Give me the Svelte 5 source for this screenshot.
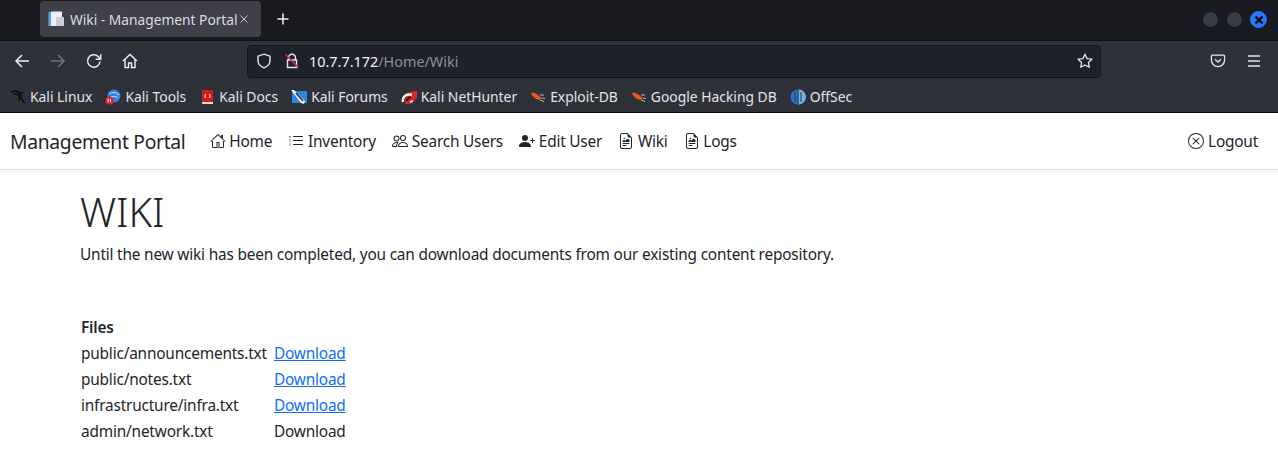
<script>
  const bookmarks = [
    { label: "Kali Linux", icon: "dragon" },
    { label: "Kali Tools", icon: "tools" },
    { label: "Kali Docs", icon: "docs" },
    { label: "Kali Forums", icon: "forums" },
    { label: "Kali NetHunter", icon: "hunter" },
    { label: "Exploit-DB", icon: "bug" },
    { label: "Google Hacking DB", icon: "bug" },
    { label: "OffSec", icon: "offsec" },
  ];

  const HOUSE = "M2 13.5V7h1v6.5a.5.5 0 0 0 .5.5h9a.5.5 0 0 0 .5-.5V7h1v6.5a1.5 1.5 0 0 1-1.5 1.5h-9A1.5 1.5 0 0 1 2 13.5zm11-11V6l-2-2V2.5a.5.5 0 0 1 .5-.5h1a.5.5 0 0 1 .5.5zM7.293 1.5a1 1 0 0 1 1.414 0l6.647 6.646a.5.5 0 0 1-.708.708L8 2.207 1.354 8.854a.5.5 0 1 1-.708-.708L7.293 1.5zM6.500 9h3v5.500h-1V10h-1v4.500h-1z";
  const LIST = "M5 11.5a.5.5 0 0 1 .5-.5h9a.5.5 0 0 1 0 1h-9a.5.5 0 0 1-.5-.5zm0-4a.5.5 0 0 1 .5-.5h9a.5.5 0 0 1 0 1h-9a.5.5 0 0 1-.5-.5zm0-4a.5.5 0 0 1 .5-.5h9a.5.5 0 0 1 0 1h-9a.5.5 0 0 1-.5-.5zM1.5 3h1v1h-1zm0 1.2h1v.6h-1zm0 2.3h1v1h-1zm0 1.7h1v.6h-1zm0 2.3h1v1h-1zm0 1.7h1v.6h-1z";
  const PEOPLE = "M15 14s1 0 1-1-1-4-5-4-5 3-5 4 1 1 1 1h8zm-7.978-1A.261.261 0 0 1 7 12.996c.001-.264.167-1.03.76-1.72C8.312 10.629 9.282 10 11 10c1.717 0 2.687.63 3.24 1.276.593.69.758 1.457.76 1.72l-.008.002a.274.274 0 0 1-.014.002H7.022zM11 7a2 2 0 1 0 0-4 2 2 0 0 0 0 4zm3-2a3 3 0 1 1-6 0 3 3 0 0 1 6 0zM6.936 9.28a5.88 5.88 0 0 0-1.23-.247A7.35 7.35 0 0 0 5 9c-4 0-5 3-5 4 0 .667.333 1 1 1h4.216A2.238 2.238 0 0 1 5 13c0-1.01.377-2.042 1.09-2.904.243-.294.526-.569.846-.816zM4.92 10A5.493 5.493 0 0 0 4 13H1c0-.26.164-1.03.76-1.724.545-.636 1.492-1.256 3.16-1.275zM1.5 5.5a3 3 0 1 1 6 0 3 3 0 0 1-6 0zm3-2a2 2 0 1 0 0 4 2 2 0 0 0 0-4z";
  const PERSON_PLUS = "M1 14s-1 0-1-1 1-4 6-4 6 3 6 4-1 1-1 1H1zm5-6a3 3 0 1 0 0-6 3 3 0 0 0 0 6zM13.5 5a.5.5 0 0 1 .5.5V7h1.5a.5.5 0 0 1 0 1H14v1.5a.5.5 0 0 1-1 0V8h-1.5a.5.5 0 0 1 0-1H13V5.5a.5.5 0 0 1 .5-.5z";
  const RICHTEXT = "M14 14V4.5L9.5 0H4a2 2 0 0 0-2 2v12a2 2 0 0 0 2 2h8a2 2 0 0 0 2-2zM9.5 3A1.5 1.5 0 0 0 11 4.5h2V14a1 1 0 0 1-1 1H4a1 1 0 0 1-1-1V2a1 1 0 0 1 1-1h5.5v2zM4.5 12.5A.5.5 0 0 1 5 12h3a.5.5 0 0 1 0 1H5a.5.5 0 0 1-.5-.5zm0-2A.5.5 0 0 1 5 10h6a.5.5 0 0 1 0 1H5a.5.5 0 0 1-.5-.5zm1.639-3.708 1.33.886 1.854-1.855a.25.25 0 0 1 .289-.047l1.888.974V8.5a.5.5 0 0 1-.5.5H5a.5.5 0 0 1-.5-.5V8s1.54-1.274 1.639-1.208zM6.25 6a.75.75 0 1 0 0-1.5.75.75 0 0 0 0 1.5z";
  const X_CIRCLE = "M8 15A7 7 0 1 1 8 1a7 7 0 0 1 0 14zm0 1A8 8 0 1 0 8 0a8 8 0 0 0 0 16zM4.646 4.646a.5.5 0 0 1 .708 0L8 7.293l2.646-2.647a.5.5 0 0 1 .708.708L8.707 8l2.647 2.646a.5.5 0 0 1-.708.708L8 8.707l-2.646 2.647a.5.5 0 0 1-.708-.708L7.293 8 4.646 5.354a.5.5 0 0 1 0-.708z";

  const links = [
    { label: "Home", d: HOUSE },
    { label: "Inventory", d: LIST },
    { label: "Search Users", d: PEOPLE },
    { label: "Edit User", d: PERSON_PLUS },
    { label: "Wiki", d: RICHTEXT },
    { label: "Logs", d: RICHTEXT },
  ];

  const files = [
    { name: "public/announcements.txt", link: true },
    { name: "public/notes.txt", link: true },
    { name: "infrastructure/infra.txt", link: true },
    { name: "admin/network.txt", link: false },
  ];
</script>

<div class="browser">
  <div class="titlebar">
    <div class="tab">
      <svg class="favicon" width="16" height="16" viewBox="0 0 16 16">
        <rect x="0.500" y="1" width="6" height="14" fill="#5aa5e0" />
        <rect x="3" y="0.500" width="11" height="14.500" fill="#eef0f3" />
        <rect x="8" y="6" width="8" height="9" fill="#c9cdd3" />
      </svg>
      <span class="tab-title">Wiki - Management Portal</span>
      <svg class="tab-close" width="10" height="10" viewBox="0 0 10 10">
        <path d="M1.5 1.5l7 7M8.5 1.5l-7 7" stroke="#c9cbd0" stroke-width="1" fill="none" />
      </svg>
    </div>
    <svg class="new-tab" width="16" height="16" viewBox="0 0 16 16">
      <path d="M8 2.5v11M2.5 8h11" stroke="#f2f2f4" stroke-width="1.5" fill="none" />
    </svg>
    <div class="window-controls">
      <span class="ctl"></span>
      <span class="ctl"></span>
      <span class="ctl close">
        <svg width="10" height="10" viewBox="0 0 10 10">
          <path d="M1.5 1.5l7 7M8.5 1.5l-7 7" stroke="#0c0d12" stroke-width="2.4" fill="none" />
        </svg>
      </span>
    </div>
  </div>

  <div class="toolbar">
    <div class="nav-buttons">
      <svg width="16" height="16" viewBox="0 0 16 16" fill="none" stroke="#f0f0f3" stroke-width="1.5">
        <path d="M15 8H2M8 2L2 8l6 6" />
      </svg>
      <svg width="16" height="16" viewBox="0 0 16 16" fill="none" stroke="#72747b" stroke-width="1.5">
        <path d="M1 8h13M8 2l6 6-6 6" />
      </svg>
      <svg width="16" height="16" viewBox="0 0 16 16" fill="none" stroke="#f0f0f3" stroke-width="1.5">
        <path d="M14 8.5A6.2 6.2 0 1 1 12 3.4L14.5 6" />
        <path d="M14.7 1.2v5h-5" />
      </svg>
      <svg width="16" height="16" viewBox="0 0 16 16" fill="none" stroke="#f0f0f3" stroke-width="1.4">
        <path d="M1 8l7-6.5L15 8M3 6.5V14.5h3.5V10h3v4.5H13V6.5" />
      </svg>
    </div>
    <div class="urlbar">
      <svg width="16" height="16" viewBox="0 0 16 16" fill="none" stroke="#e6e6ea" stroke-width="1.4">
        <path d="M8 1.2l6 2v4.3c0 3.4-2.5 6-6 7.3-3.5-1.3-6-3.9-6-7.3V3.2z" />
      </svg>
      <svg class="lock" width="16" height="16" viewBox="0 0 16 16" fill="none">
        <path d="M4.5 7V4.8a3.5 3.5 0 0 1 7 0V7M3.5 7h9v7.5h-9z" stroke="#e6e6ea" stroke-width="1.4" />
        <path d="M1.5 1.5l13 13" stroke="#e22850" stroke-width="1.5" />
      </svg>
      <span class="url"><span class="host">10.7.7.172</span>/Home/Wiki</span>
      <svg class="star" width="16" height="16" viewBox="0 0 16 16" fill="none" stroke="#e6e6ea" stroke-width="1.3">
        <path d="M8 1.2l2.1 4.4 4.8.6-3.5 3.3.9 4.8L8 12l-4.3 2.3.9-4.8L1.1 6.2l4.8-.6z" stroke-linejoin="round" />
      </svg>
    </div>
    <div class="tool-right">
      <svg width="16" height="16" viewBox="0 0 16 16" fill="none" stroke="#e6e6ea" stroke-width="1.3">
        <path d="M2.3 2.2h11.4a.9.9 0 0 1 .9.9v4a6.6 6.6 0 0 1-13.2 0v-4a.9.9 0 0 1 .9-.9z" />
        <path d="M5 6.2l3 2.8 3-2.8" />
      </svg>
      <svg width="16" height="16" viewBox="0 0 16 16" fill="none" stroke="#e6e6ea" stroke-width="1.4">
        <path d="M2 3h12M2 8h12M2 13h12" />
      </svg>
    </div>
  </div>

  <div class="bookmarks">
    {#each bookmarks as b}
      <div class="bookmark">
        <svg width="16" height="16" viewBox="0 0 16 16" fill="none">
          {#if b.icon === "dragon"}
            <path d="M1 3c3-1.500 7-1 9 1.500 1.500 2 .5 4 2 6 .8 1 1.500 2 2.500 3.500M3 5c3-1 5 0 6 2 .8 1.800-.5 3 .5 5M9.500 5.500L13 3" stroke="#050506" stroke-width="1.300" />
          {:else if b.icon === "tools"}
            <circle cx="9" cy="7" r="6.500" fill="#2f7fe0" />
            <path d="M4 5c3-2 7-2 10 1M6 8c2-1 5-1 7 1" stroke="#d9e8fb" stroke-width="1" />
            <circle cx="4.500" cy="11.500" r="4" fill="#e02b2b" />
            <path d="M3.200 10v3M5.500 10v3" stroke="#fff" stroke-width="1" />
          {:else if b.icon === "docs"}
            <path d="M3 1h11v12H3z" fill="#d4191f" />
            <path d="M3 13h11v2H4a1 1 0 0 1-1-1z" fill="#e8d9d9" />
            <path d="M7 5L5.500 7 7 9M10 5l1.500 2L10 9" stroke="#fff" stroke-width="1" />
          {:else if b.icon === "forums"}
            <path d="M1 2h15v12H1z" fill="#2a86e8" />
            <path d="M0 1h3l11 11-1 3-3-1z" fill="#f2f4f7" />
            <path d="M5 4l7 8" stroke="#30343c" stroke-width="1.600" />
          {:else if b.icon === "hunter"}
            <path d="M5 4l11-2.500V9l-6 6H4z" fill="#d8262c" />
            <path d="M2 13c-1-5 3-9 9-7" stroke="#f0f0f0" stroke-width="2.500" />
            <path d="M6 12c0-2 1-3.500 4-3.500" stroke="#1b1c20" stroke-width="2" />
            <path d="M9 13l3-1" stroke="#f0f0f0" stroke-width="1.500" />
          {:else if b.icon === "bug"}
            <path d="M1 4c3-1 6 1 8 3l3 2c-1 1.500-2 2-4 1.500C5 10 2 7 1 4z" fill="#e8591c" />
            <path d="M10 6l4 0M10 11l4 1.500M12 9l3 .5" stroke="#b8bcc6" stroke-width="1" />
          {:else}
            <circle cx="8" cy="8" r="7.500" fill="#2a76d8" />
            <path d="M8.500 0.500A7.500 7.500 0 0 1 8.500 15.500z" fill="#6fb4e8" />
            <path d="M5 3v10M8 1v14M11 3v10" stroke="#30333b" stroke-width="1" />
          {/if}
        </svg>
        <span>{b.label}</span>
      </div>
    {/each}
  </div>

  <nav class="navbar">
    <span class="brand">Management Portal</span>
    <ul class="nav-links">
      {#each links as l}
        <li>
          <svg width="16" height="16" viewBox="0 0 16 16" fill="currentColor">
            <path fill-rule="evenodd" d={l.d} />
          </svg>
          {l.label}
        </li>
      {/each}
    </ul>
    <div class="nav-end">
      <svg width="16" height="16" viewBox="0 0 16 16" fill="currentColor">
        <path d={X_CIRCLE} />
      </svg>
      Logout
    </div>
  </nav>

  <main class="content">
    <h1>WIKI</h1>
    <p>Until the new wiki has been completed, you can download documents from our existing content repository.</p>
    <table>
      <thead>
        <tr><th>Files</th><th></th></tr>
      </thead>
      <tbody>
        {#each files as f}
          <tr>
            <td>{f.name}</td>
            <td>
              {#if f.link}
                <a href="#download">Download</a>
              {:else}
                Download
              {/if}
            </td>
          </tr>
        {/each}
      </tbody>
    </table>
  </main>
</div>

<style>
  :global(body) {
    background: #fff;
    overflow: hidden;
  }

  .browser {
    width: 1278px;
    height: 459px;
    overflow: hidden;
    font-family: "Noto Sans", sans-serif;
    color: #212529;
  }

  .titlebar {
    height: 41px;
    box-sizing: border-box;
    background: #191a1f;
    border-bottom: 1px solid #0d0e12;
    display: flex;
    align-items: flex-start;
    padding: 1px 11px 0 40px;
  }

  .tab {
    width: 221px;
    height: 36px;
    box-sizing: border-box;
    background: #3f4048;
    border-radius: 4px;
    display: flex;
    align-items: center;
    padding: 0 0 0 8px;
    color: #dcdde0;
    font-size: 13.75px;
  }

  .tab-title {
    margin-left: 6px;
    white-space: nowrap;
  }

  .tab-close {
    margin-left: 1px;
  }

  .new-tab {
    margin: 10px 0 0 14px;
  }

  .window-controls {
    margin: 10px 0 0 auto;
    display: flex;
    gap: 7px;
  }

  .ctl {
    width: 17px;
    height: 17px;
    box-sizing: border-box;
    border-radius: 50%;
    background: #373b47;
    border: 1px solid #15161a;
    display: flex;
    align-items: center;
    justify-content: center;
  }

  .ctl.close {
    background: #2777ff;
    border-color: #2777ff;
  }

  .toolbar {
    height: 40px;
    background: #2f3139;
    display: flex;
    align-items: center;
    padding-left: 14px;
  }

  .nav-buttons {
    display: flex;
    gap: 20px;
    width: 233px;
  }

  .urlbar {
    width: 854px;
    height: 33px;
    box-sizing: border-box;
    background: #1f212a;
    border: 1px solid #121318;
    border-radius: 4px;
    display: flex;
    align-items: center;
    padding: 0 7px 0 8px;
    font-size: 14.4px;
    color: #8d8f96;
  }

  .lock {
    margin-left: 12px;
  }

  .url {
    margin-left: 9px;
  }

  .host {
    color: #f3f3f5;
  }

  .star {
    margin-left: auto;
  }

  .tool-right {
    display: flex;
    gap: 20px;
    margin-left: 109px;
  }

  .bookmarks {
    height: 32px;
    box-sizing: border-box;
    background: #2f3139;
    border-bottom: 1px solid #0d0e12;
    display: flex;
    align-items: center;
    padding: 0 0 0 10px;
    gap: 13px;
    font-size: 13.87px;
    color: #e3e4e7;
  }

  .bookmark {
    display: flex;
    align-items: center;
    gap: 4px;
    white-space: nowrap;
  }

  .navbar {
    height: 57px;
    box-sizing: border-box;
    border-bottom: 1px solid #dee2e6;
    box-shadow: 0 2px 4px rgba(0, 0, 0, 0.05);
    display: flex;
    align-items: center;
    padding: 0 12px 0 10px;
    font-size: 15.4px;
    letter-spacing: -0.21px;
  }

  .brand {
    font-size: 19.3px;
    letter-spacing: -0.3px;
    margin-right: 16px;
  }

  .nav-links {
    list-style: none;
    margin: 0;
    padding: 0;
    display: flex;
  }

  .nav-links li,
  .nav-end {
    padding: 8px;
    white-space: nowrap;
  }

  .nav-end {
    margin-left: auto;
  }

  svg {
    flex: none;
    display: block;
  }

  .nav-links svg,
  .nav-end svg {
    display: inline-block;
    vertical-align: -2px;
  }

  .content {
    padding: 18px 80px 0;
  }

  h1 {
    margin: 0 0 7px;
    font-size: 40px;
    font-weight: 350;
    line-height: 48px;
  }

  p {
    margin: 0 0 48px;
    font-size: 15.4px;
    letter-spacing: -0.19px;
    line-height: 24px;
  }

  table {
    border-collapse: collapse;
    font-size: 15.4px;
    letter-spacing: -0.19px;
    line-height: 24px;
  }

  th,
  td {
    padding: 1px 6px 1px 1px;
    text-align: left;
  }

  th {
    font-weight: 600;
  }

  a {
    color: #0d6efd;
    text-decoration: underline;
  }
</style>
